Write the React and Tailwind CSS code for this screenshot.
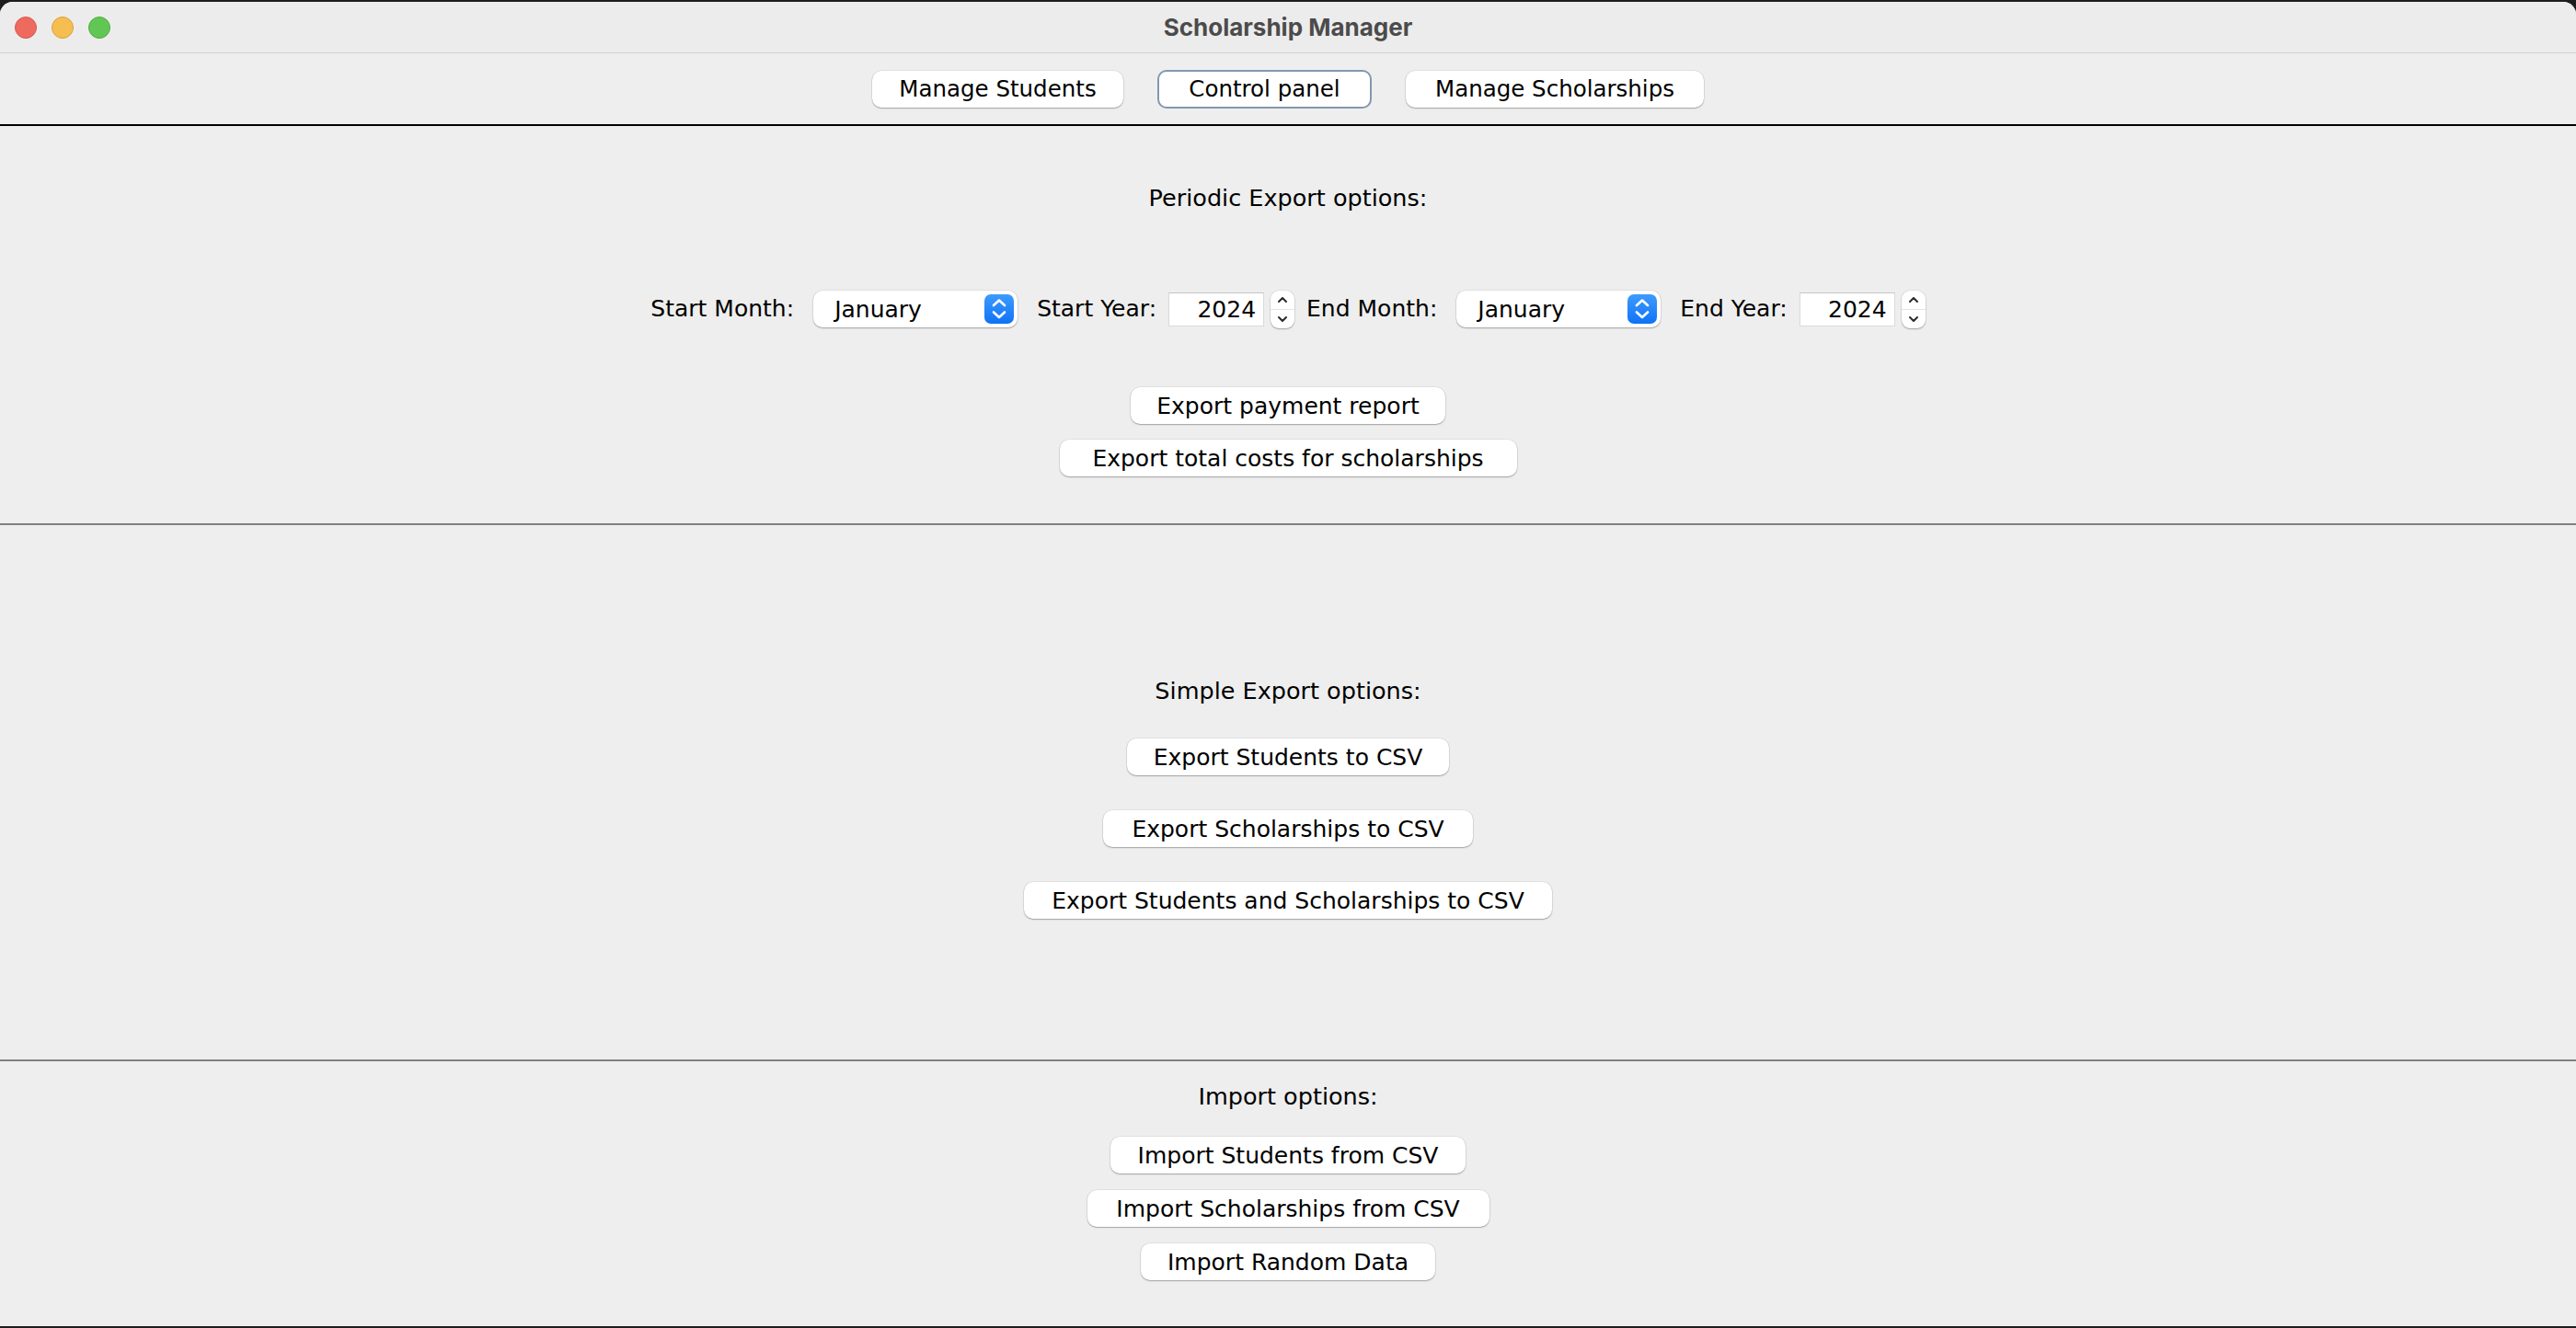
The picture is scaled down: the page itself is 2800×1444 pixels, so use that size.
import React, { useState } from "react";

const tabs = ["Manage Students", "Control panel", "Manage Scholarships"];
const tabWidths = { "Manage Students": "w-[273px]", "Control panel": "w-[233px]", "Manage Scholarships": "w-[324px]" };

function MacButton({ label, width }) {
  return (
    <button
      className={`${width} h-[40px] shrink-0 bg-white rounded-[10px] text-[25px] text-black leading-none flex items-center justify-center shadow-[0_1px_1.5px_rgba(0,0,0,0.28),0_0_0_0.5px_rgba(0,0,0,0.1)]`}
    >
      {label}
    </button>
  );
}

function ComboBox({ value }) {
  return (
    <div className="mx-[8px] w-[222px] h-[40px] shrink-0 bg-white rounded-[10px] flex items-center justify-between pl-[23px] pr-[4px] shadow-[0_1px_1.5px_rgba(0,0,0,0.28),0_0_0_0.5px_rgba(0,0,0,0.1)]">
      <span className="text-[25px] leading-none">{value}</span>
      <div className="w-[32px] h-[32px] rounded-[7px] bg-gradient-to-b from-[#3d9bfd] to-[#0b72f6] flex items-center justify-center">
        <svg width="32" height="32" viewBox="0 0 32 32" fill="none" stroke="white" strokeWidth="2.6" strokeLinecap="round" strokeLinejoin="round">
          <path d="M10 12 L16 6.5 L22 12" />
          <path d="M10 19.5 L16 25 L22 19.5" />
        </svg>
      </div>
    </div>
  );
}

function YearSpinner({ value }) {
  return (
    <div className="flex items-center gap-[7px] shrink-0">
      <div className="w-[104px] h-[37px] bg-white border border-[#dadada] border-t-[#c4c4c4] flex items-center justify-end pr-[8px]">
        <span className="text-[25px] leading-none">{value}</span>
      </div>
      <div className="w-[26px] h-[41px] bg-white rounded-[9px] flex flex-col shadow-[0_1px_1.5px_rgba(0,0,0,0.28),0_0_0_0.5px_rgba(0,0,0,0.1)]">
        <div className="flex-1 flex items-center justify-center border-b border-[#e4e4e4]">
          <svg width="14" height="10" viewBox="0 0 14 10" fill="none" stroke="#2a2a2a" strokeWidth="2" strokeLinecap="round" strokeLinejoin="round">
            <path d="M3 7 L7 3 L11 7" />
          </svg>
        </div>
        <div className="flex-1 flex items-center justify-center">
          <svg width="14" height="10" viewBox="0 0 14 10" fill="none" stroke="#2a2a2a" strokeWidth="2" strokeLinecap="round" strokeLinejoin="round">
            <path d="M3 3 L7 7 L11 3" />
          </svg>
        </div>
      </div>
    </div>
  );
}

export default function App() {
  const [active, setActive] = useState("Control panel");

  return (
    <div className="w-[2800px] h-[1444px] bg-[#1d1d1d] pt-[2px] pb-[2px] font-['DejaVu_Sans',sans-serif] text-black">
      <div className="h-full flex flex-col bg-[#eeeeee] rounded-t-[14px] overflow-hidden">
        {/* title bar */}
        <div className="h-[56px] shrink-0 bg-[#ececec] border-b border-[#cfcfcf] relative flex items-center justify-center">
          <div className="absolute left-[16px] top-[16px] flex gap-[16px]">
            <span className="w-[24px] h-[24px] rounded-full bg-[#ee6a5f] border border-[#d8574c]" />
            <span className="w-[24px] h-[24px] rounded-full bg-[#f6be50] border border-[#dca13a]" />
            <span className="w-[24px] h-[24px] rounded-full bg-[#62c655] border border-[#4fad43]" />
          </div>
          <span className="font-['Inter',sans-serif] font-bold text-[26px] text-[#4b4b4b] leading-none">Scholarship Manager</span>
        </div>

        {/* tabs */}
        <div className="h-[77px] shrink-0 flex items-center justify-center gap-[37px] pt-[1px]">
          {tabs.map((t) => (
            <button
              key={t}
              onClick={() => setActive(t)}
              className={
                active === t
                  ? `${tabWidths[t]} h-[42px] bg-white rounded-[10px] border-[2px] border-[#8496b0] text-[24.5px] leading-none flex items-center justify-center`
                  : `${tabWidths[t]} h-[40px] bg-white rounded-[10px] text-[24.5px] leading-none flex items-center justify-center shadow-[0_1px_1.5px_rgba(0,0,0,0.28),0_0_0_0.5px_rgba(0,0,0,0.1)]`
              }
            >
              {t}
            </button>
          ))}
        </div>
        <div className="h-[2px] shrink-0 bg-black" />

        {/* periodic export */}
        <div className="h-[432px] shrink-0 flex flex-col items-center pt-[63px]">
          <div className="h-[30px] flex items-center text-[25.5px]">Periodic Export options:</div>
          <div className="mt-[86px] h-[40px] flex items-center gap-[13px] text-[25px]">
            <span>Start Month:</span>
            <ComboBox value="January" />
            <span>Start Year:</span>
            <YearSpinner value="2024" />
            <span>End Month:</span>
            <ComboBox value="January" />
            <span>End Year:</span>
            <YearSpinner value="2024" />
          </div>
          <div className="mt-[65px] flex flex-col items-center gap-[17px]">
            <MacButton label="Export payment report" width="w-[342px]" />
            <MacButton label="Export total costs for scholarships" width="w-[497px]" />
          </div>
        </div>
        <div className="h-[2px] shrink-0 bg-[#808080]" />

        {/* simple export */}
        <div className="h-[581px] shrink-0 flex flex-col items-center pt-[165px]">
          <div className="h-[30px] flex items-center text-[25.5px]">Simple Export options:</div>
          <div className="mt-[37px] flex flex-col items-center gap-[38px]">
            <MacButton label="Export Students to CSV" width="w-[350px]" />
            <MacButton label="Export Scholarships to CSV" width="w-[402px]" />
            <MacButton label="Export Students and Scholarships to CSV" width="w-[574px]" />
          </div>
        </div>
        <div className="h-[2px] shrink-0 bg-[#808080]" />

        {/* import */}
        <div className="flex-1 flex flex-col items-center pt-[23px]">
          <div className="h-[30px] flex items-center text-[25.5px]">Import options:</div>
          <div className="mt-[29px] flex flex-col items-center gap-[18px]">
            <MacButton label="Import Students from CSV" width="w-[386px]" />
            <MacButton label="Import Scholarships from CSV" width="w-[437px]" />
            <MacButton label="Import Random Data" width="w-[320px]" />
          </div>
        </div>
      </div>
    </div>
  );
}
